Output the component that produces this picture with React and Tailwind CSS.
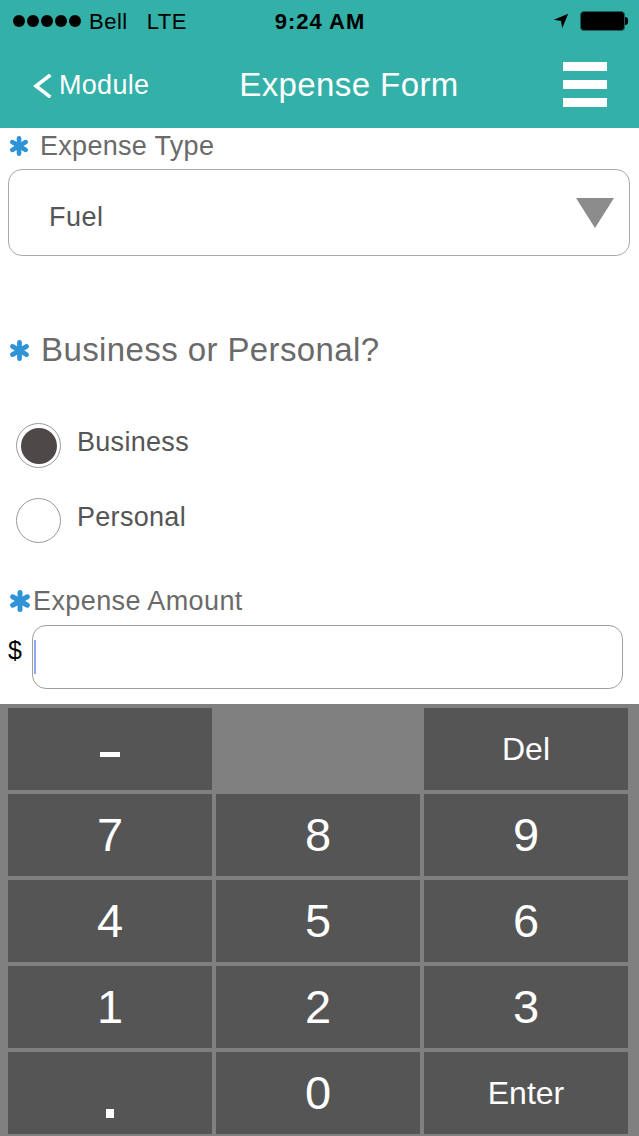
const font = { fontFamily: '"Liberation Sans", Arial, sans-serif' };

function Asterisk({ className = "" }) {
  return (
    <svg viewBox="0 0 24 24" className={className}>
      <g fill="#2f93d8">
        <rect x="9.5" y="1" width="5" height="22" rx="2.5" />
        <rect x="9.5" y="1" width="5" height="22" rx="2.5" transform="rotate(60 12 12)" />
        <rect x="9.5" y="1" width="5" height="22" rx="2.5" transform="rotate(-60 12 12)" />
      </g>
    </svg>
  );
}

function Radio({ checked }) {
  return (
    <div className="w-[45px] h-[45px] rounded-full border border-[#9a9a9a] bg-white flex items-center justify-center">
      {checked && <div className="w-[36px] h-[36px] rounded-full bg-[#4f4848]" />}
    </div>
  );
}

function Key({ label, className = "", empty }) {
  if (empty) return <div className="bg-[#808080]" />;
  return (
    <div className={"bg-[#555555] text-white flex items-center justify-center " + className}>
      {label}
    </div>
  );
}

export default function App() {
  return (
    <div className="w-[639px] h-[1136px] bg-white flex flex-col overflow-hidden" style={font}>
      {/* header */}
      <div className="bg-[#33b0a8] h-[128px] flex flex-col">
        <div className="h-[42px] flex items-center pl-[13px] pr-[11px] text-black text-[22px] relative">
          <div className="flex items-center gap-[2px]">
            {[0, 1, 2, 3, 4].map((i) => (
              <span key={i} className="w-[12px] h-[12px] rounded-full bg-black" />
            ))}
          </div>
          <span className="ml-[8px] tracking-[0.5px]">Bell</span>
          <span className="ml-[19px] tracking-[0.5px]">LTE</span>
          <span className="absolute left-[320px] -translate-x-1/2 font-bold tracking-[1px]">9:24 AM</span>
          <div className="ml-auto flex items-center gap-[11px]">
            <svg viewBox="0 0 20 20" className="w-[16px] h-[16px]">
              <path d="M19 1 L1 8.5 L10 10 L11.5 19 Z" fill="black" />
            </svg>
            <div className="flex items-center">
              <div className="w-[45px] h-[20px] rounded-[4px] bg-black border border-[#1c5e5a]" />
              <div className="w-[3px] h-[8px] bg-black rounded-r" />
            </div>
          </div>
        </div>
        <div className="flex-1 flex items-center relative text-white">
          <div className="flex items-center ml-[32px]">
            <svg viewBox="0 0 20 24" className="w-[20px] h-[24px] mt-[2px]">
              <path d="M17 2 L4 12 L17 22" fill="none" stroke="white" strokeWidth="3.6" strokeLinecap="square" />
            </svg>
            <span className="ml-[7px] text-[27px] tracking-[0.3px]">Module</span>
          </div>
          <span className="absolute left-[349px] -translate-x-1/2 text-[33px] tracking-[0.4px]">Expense Form</span>
          <div className="ml-auto mr-[32px] flex flex-col gap-[9px] w-[44px] -mt-[2px]">
            <div className="h-[9px] bg-white" />
            <div className="h-[9px] bg-white" />
            <div className="h-[9px] bg-white" />
          </div>
        </div>
      </div>

      {/* form */}
      <div className="flex-1 flex flex-col">
        <div className="flex items-center mt-[2px] ml-[8px] h-[32px]">
          <Asterisk className="w-[22px] h-[22px]" />
          <span className="ml-[10px] text-[27px] tracking-[0.3px] text-[#6a6a6a]">Expense Type</span>
        </div>
        <div className="ml-[8px] mt-[7px] mr-[9px] h-[87px] rounded-[14px] border border-[#a9a9a9] flex items-center pl-[40px] pr-[14px]">
          <span className="text-[27px] tracking-[0.5px] text-[#555] mt-[10px]">Fuel</span>
          <svg viewBox="0 0 40 32" className="ml-auto w-[40px] h-[32px]">
            <path d="M1 1 H39 L20 31 Z" fill="#8c8c8c" />
          </svg>
        </div>

        <div className="flex items-center ml-[8px] mt-[76px] h-[36px]">
          <Asterisk className="w-[23px] h-[23px]" />
          <span className="ml-[10px] text-[33px] tracking-[0.4px] text-[#6a6a6a]">Business or Personal?</span>
        </div>

        <div className="flex items-center ml-[16px] mt-[55px] gap-[16px]">
          <Radio checked />
          <span className="text-[27px] tracking-[0.3px] text-[#555] -mt-[6px]">Business</span>
        </div>
        <div className="flex items-center ml-[16px] mt-[30px] gap-[16px]">
          <Radio />
          <span className="text-[27px] tracking-[0.3px] text-[#555] -mt-[6px]">Personal</span>
        </div>

        <div className="flex items-center ml-[8px] mt-[43px] h-[30px]">
          <Asterisk className="w-[24px] h-[24px]" />
          <span className="ml-[1px] text-[27px] tracking-[0.4px] text-[#6a6a6a]">Expense Amount</span>
        </div>
        <div className="flex items-center mt-[9px] ml-[8px] mr-[16px]">
          <span className="text-[25px] text-black w-[24px] -mt-[12px]">$</span>
          <div className="flex-1 h-[64px] rounded-[14px] border border-[#9e9e9e] flex items-center pl-[1px]">
            <div className="w-[2px] h-[34px] bg-[#8fa9f0]" />
          </div>
        </div>
      </div>

      {/* keypad */}
      <div className="bg-[#808080] h-[432px] pt-[4px] pb-[2px] pl-[8px] pr-[11px] grid grid-cols-3 grid-rows-5 gap-[4px]">
        <Key label={<span className="w-[20px] h-[5px] bg-white mt-[11px]" />} />
        <Key empty />
        <Key label="Del" className="text-[32px]" />
        <Key label="7" className="text-[47px]" />
        <Key label="8" className="text-[47px]" />
        <Key label="9" className="text-[47px]" />
        <Key label="4" className="text-[47px]" />
        <Key label="5" className="text-[47px]" />
        <Key label="6" className="text-[47px]" />
        <Key label="1" className="text-[47px]" />
        <Key label="2" className="text-[47px]" />
        <Key label="3" className="text-[47px]" />
        <Key label={<span className="w-[8px] h-[9px] bg-white mt-[40px]" />} />
        <Key label="0" className="text-[47px]" />
        <Key label="Enter" className="text-[32px]" />
      </div>
    </div>
  );
}
